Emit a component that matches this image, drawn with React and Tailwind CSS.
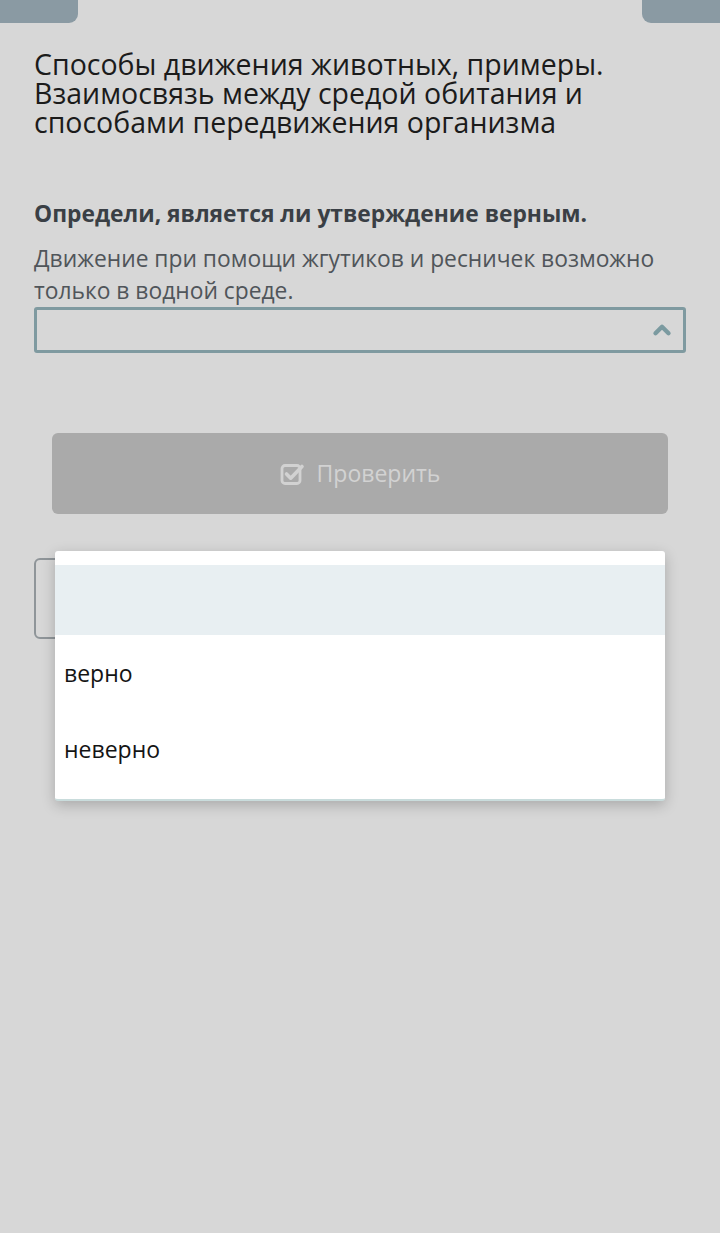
import { ChevronUp } from "lucide-react";

function CheckIcon() {
  return (
    <svg width="25" height="24" viewBox="0 0 25 24" fill="none">
      <rect x="2" y="3.5" width="18" height="18" rx="3" stroke="currentColor" strokeWidth="2.8" />
      <path d="M6.5 12l4.2 4.2L22 4.5" stroke="currentColor" strokeWidth="3.6" strokeLinecap="round" strokeLinejoin="round" />
    </svg>
  );
}

export default function App() {
  return (
    <div
      className="relative min-h-[1233px] w-[720px] bg-[#d7d7d7] overflow-hidden"
      style={{ fontFamily: '"Open Sans", "Noto Sans", sans-serif' }}
    >
      {/* top tabs */}
      <div className="flex justify-between">
        <div className="h-[23px] w-[78px] bg-[#8a9aa3] rounded-br-[9px]" />
        <div className="h-[23px] w-[78px] bg-[#8a9aa3] rounded-bl-[9px]" />
      </div>

      <div className="px-[34px]">
        <h1 className="mt-[27px] text-[28.5px] leading-[29px] text-[#1b1b1b]">
          Способы движения животных, примеры. Взаимосвязь между средой обитания и способами передвижения организма
        </h1>

        <p className="mt-[62px] text-[22.8px] leading-[30px] font-bold text-[#3a3f45]">
          Определи, является ли утверждение верным.
        </p>

        <p className="mt-[14px] text-[22.8px] leading-[32px] text-[#50555a]">
          Движение при помощи жгутиков и ресничек возможно только в водной среде.
        </p>

        <div className="h-[46px] border-[3px] border-[#7f9aa0] rounded-[3px] flex items-center justify-end pr-[8px]">
          <ChevronUp size={26} strokeWidth={4} className="text-[#7b9aa0]" />
        </div>

        <div className="mx-[18px] mt-[80px] h-[81px] bg-[#aaaaaa] rounded-[6px] flex items-center justify-center gap-[12px] text-[#d2d2d2]">
          <CheckIcon />
          <span className="text-[23px]">Проверить</span>
        </div>

        <div className="mt-[44px] h-[81px] w-[40px] border-2 border-[#8f9599] rounded-[6px]" />
      </div>

      {/* open dropdown list */}
      <div className="absolute left-[55px] top-[551px] w-[610px] bg-white rounded-[3px] border-b-2 border-[#c9dcdc] shadow-[0_4px_14px_rgba(0,0,0,0.22)] pt-[14px] pb-[12px]">
        <div className="h-[70px] bg-[#e8eff2]" />
        <div className="h-[76px] flex items-center px-[9px] text-[23px] text-[#141414]">верно</div>
        <div className="h-[76px] flex items-center px-[9px] text-[23px] text-[#141414]">неверно</div>
      </div>
    </div>
  );
}
